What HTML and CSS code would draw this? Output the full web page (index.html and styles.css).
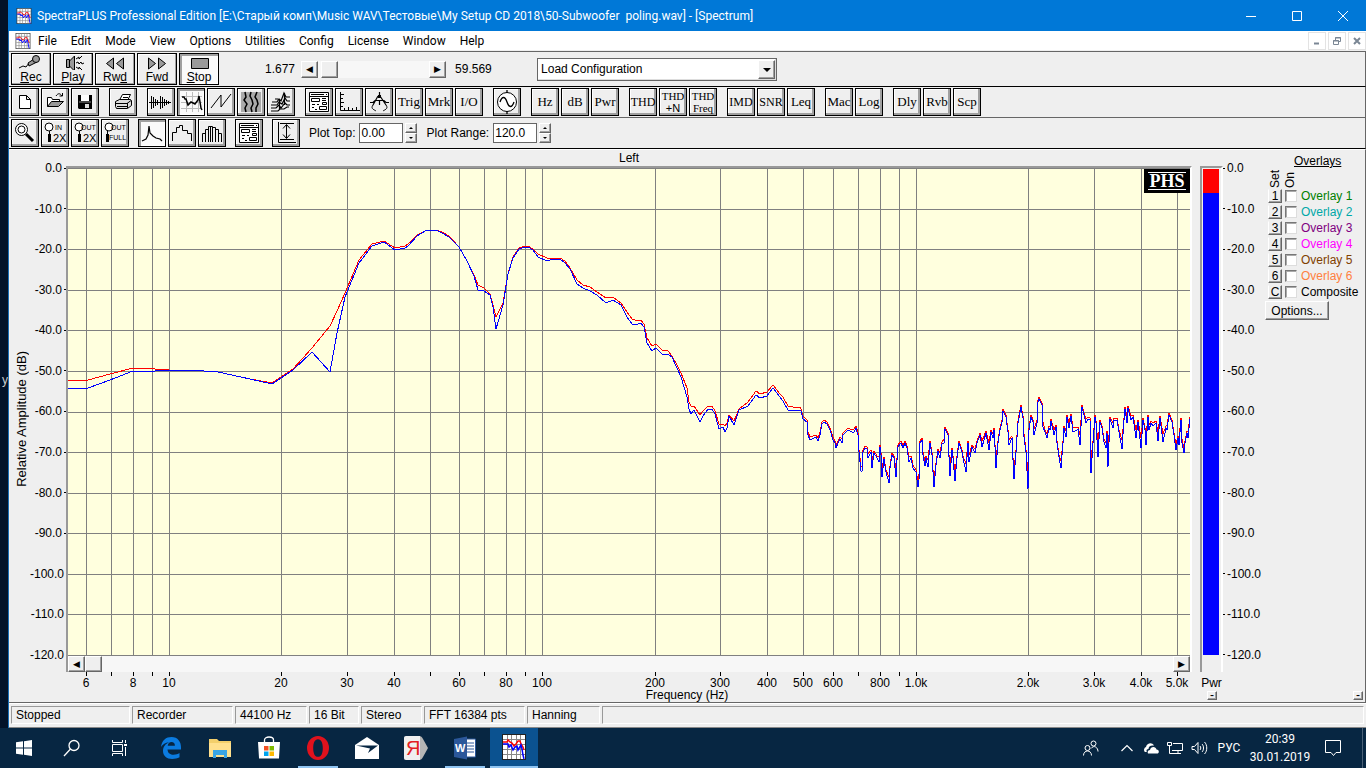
FILE: index.html
```html
<!DOCTYPE html>
<html lang="ru">
<head>
    <meta charset="UTF-8">
    <meta name="viewport" content="width=device-width, initial-scale=1.0">
    <title>SpectraPLUS Professional Edition</title>
    <link rel="stylesheet" href="styles.css">
</head>
<body>
    <!-- shared icons -->
    <svg class="defs" aria-hidden="true">
        <symbol id="app-icon" viewBox="0 0 24 26">
            <rect x="0.5" y="0.5" width="23" height="25" fill="#fff" stroke="#222"/>
            <path d="M5.500 1v24M9.500 1v24M14.500 1v24M18.500 1v24M1 5.500h22M1 10.500h22M1 15.500h22M1 20.500h22" stroke="#888"/>
            <path d="M1 8h4l1-2 2 2 2 1 2 3 2-2 2-3h2l1 3 2 3 1 3" fill="none" stroke="#f00" stroke-width="1.500"/>
            <path d="M1 10h5l1 3 2-2 2 5 2-3 2-1 1 4 3-5 1 4 1 6 1 4" fill="none" stroke="#00f" stroke-width="1.500"/>
        </symbol>
        <symbol id="dialog-icon" viewBox="1 1 26 26">
            <path d="M4.500 4.500h19v19h-19zM4.500 8.500h19" fill="#fff" stroke="#000"/>
            <path d="M6 6.500h13M21 6.500h1" stroke="#000"/>
            <path d="M6.500 10.500h8v3h-8zM17.500 14.500h4v2h-4zM14.500 18.500h7v3h-7z" fill="none" stroke="#000"/>
            <path d="M17 10.500h4M17 12.500h4M7 16.500h3M12 16.500h2M7 19.500h2M10 21.500h2" stroke="#000"/>
        </symbol>
    </svg>

    <div class="desktop">
        <span class="desktop-label">y</span>
        <div class="window">
            <header class="titlebar">
                <svg class="app-icon"><use href="#app-icon"/></svg>
                <h1>SpectraPLUS Professional Edition [E:\Старый комп\Music WAV\Тестовые\My Setup CD 2018\50-Subwoofer&nbsp; poling.wav] - [Spectrum]</h1>
                <div class="window-buttons">
                    <button aria-label="Minimize"><svg width="10" height="10"><path d="M0 5.500h10" stroke="#fff"/></svg></button>
                    <button aria-label="Maximize"><svg width="10" height="10"><path d="M.5.500h9v9h-9z" stroke="#fff" fill="none"/></svg></button>
                    <button aria-label="Close"><svg width="10" height="10"><path d="M0 0l10 10M10 0L0 10" stroke="#fff"/></svg></button>
                </div>
            </header>

            <nav class="menubar">
                <svg class="app-icon"><use href="#app-icon"/></svg>
                <button>File</button>
                <button>Edit</button>
                <button>Mode</button>
                <button>View</button>
                <button>Options</button>
                <button>Utilities</button>
                <button>Config</button>
                <button>License</button>
                <button>Window</button>
                <button>Help</button>
                <div class="child-buttons">
                    <button aria-label="Minimize spectrum"><svg width="10" height="10"><path d="M2 7.500h5" stroke="#7a8694" stroke-width="2"/></svg></button>
                    <button aria-label="Restore spectrum"><svg width="10" height="10"><path d="M3.500 4V1.500h5v4H7M1.500 4.500h5v4h-5zM3 2h6M1 5h6" stroke="#7a8694" fill="none"/></svg></button>
                    <button aria-label="Close spectrum"><svg width="10" height="10"><path d="M2 2l6 6M8 2L2 8" stroke="#7a8694" stroke-width="2"/></svg></button>
                </div>
            </nav>

            <!-- Transport -->
            <div class="toolbar transport">
                <button class="play-btn"><svg viewBox="0 0 38 16"><path d="M7 14l4-2 3 1 3-4" fill="none" stroke="#000"/><path d="M16 9l6-4 3 3-8 4z" fill="#999" stroke="#000"/><circle cx="24" cy="5" r="3.500" fill="#999" stroke="#000"/></svg><span><u>R</u>ec</span></button>
                <button class="play-btn"><svg viewBox="0 0 38 16"><path d="M12.500 5.500h3v8h-3zM15.500 7l5-5v15l-5-5z" fill="#999" stroke="#000"/><path d="M22 5l3-2v2l3-3M22 9l2-1 1 2 2-2 1 2 2-1M22 13l3 2v-2l3 3" fill="none" stroke="#000"/></svg><span><u>P</u>lay</span></button>
                <button class="play-btn"><svg viewBox="0 0 38 16"><path d="M17.500 4v11l-7-5.500zM27.500 4v11l-7-5.500z" fill="#999" stroke="#000"/></svg><span>Rw<u>d</u></span></button>
                <button class="play-btn"><svg viewBox="0 0 38 16"><path d="M10.500 4v11l7-5.500zM20.500 4v11l7-5.500z" fill="#999" stroke="#000"/></svg><span>Fwd</span></button>
                <button class="play-btn pressed"><svg viewBox="0 0 38 16"><path d="M11.500 4.500h17v10h-17z" fill="#999" stroke="#000"/></svg><span><u>S</u>top</span></button>
                <div class="position">
                    <label for="position">1.677</label>
                    <button class="bevel arrow" aria-label="Back">&#9664;&#xFE0E;</button>
                    <input type="range" id="position" min="0" max="100" value="3">
                    <button class="bevel arrow" aria-label="Forward">&#9654;&#xFE0E;</button>
                    <output>59.569</output>
                </div>
                <div class="config">
                    <select aria-label="Configuration">
                        <option>Load Configuration</option>
                    </select>
                    <span class="bevel drop-arrow"></span>
                </div>
            </div>

            <!-- Main tools -->
            <div class="toolbar tools">
                <div class="group">
                    <button class="tool" aria-label="New"><svg viewBox="1 1 26 26"><path d="M8.500 7.500h7l4 4v9h-11zM15.500 7.500v4h4" fill="#fff" stroke="#000"/></svg></button>
                    <button class="tool" aria-label="Open"><svg viewBox="1 1 26 26"><path d="M6.500 18.500v-9h4l1 2h7v2" fill="#fff" stroke="#000"/><path d="M6.500 18.500l4-5h12l-5 5z" fill="#999" stroke="#000"/><path d="M15 8c2-3 4-3 6 0M21.500 5v3h-3" fill="none" stroke="#000"/></svg></button>
                    <button class="tool" aria-label="Save"><svg viewBox="1 1 26 26"><path d="M7 7h14v14H8l-1-1z"/><path d="M10 7h8v6h-8z" fill="#fff"/><path d="M14 16h4v4h-4z" fill="#ddd"/><path d="M8 14h12" stroke="#888"/></svg></button>
                </div>
                <div class="group">
                    <button class="tool" aria-label="Print"><svg viewBox="1 1 26 26"><path d="M10.500 12l3-5.500h8l-3 6" fill="#fff" stroke="#000"/><path d="M6.500 13.500l4-2h11l1 1v5l-4 3h-11l-1-2z" fill="#ddd" stroke="#000"/><path d="M7 15.500h11l4-3M8 18.500h10M18.500 15v5M14 9.500h5" stroke="#000" fill="none"/></svg></button>
                </div>
                <div class="group">
                    <button class="tool" aria-label="Time series"><svg viewBox="1 1 26 26"><path d="M2 14.500h22M4.500 8v13M6.500 9v11M8.500 11v7M10.500 12v5M13.500 8v13M15.500 9v11M17.500 11v7M19.500 12v5M21.500 13v3" stroke="#000"/></svg></button>
                    <button class="tool pressed" aria-label="Spectrum"><svg viewBox="1 1 26 26"><path d="M9.500 4v20M15.500 4v20M21.500 4v20M4 8.500h21M4 14.500h21M4 20.500h21" stroke="#bbb"/><path d="M5 9h2l1 2h1l2 6 3-3 4 2 3-4 1-4 1 6 1 6 1 2" fill="none" stroke="#000" stroke-width="1.500"/></svg></button>
                    <button class="tool" aria-label="Phase"><svg viewBox="1 1 26 26"><path d="M4 20L14 7v12L24 6" fill="none" stroke="#000"/></svg></button>
                    <button class="tool" aria-label="Spectrogram"><svg viewBox="1 1 26 26"><path d="M4 4h20v20H4z" fill="#aaa"/><path d="M8 4l1 5-2 3 3 4-2 4 1 4M14 4l-1 4 2 4 1 4-2 4 1 4M20 4l-2 5 2 3 1 4-2 4v4" fill="none" stroke="#000" stroke-width="1.500"/></svg></button>
                    <button class="tool" aria-label="3-D surface"><svg viewBox="1 1 26 26"><path d="M8 11h3M5 14h5l2-3 2 2 3-8 2 4h4M4 17h6l2-3 3 2 3-6 2 3h3M4 20h5l3-3 2 3 4-5 2 2h3M4 23h7l2-2h4l3-2h2M17.500 5v12M12.500 12v9" fill="none" stroke="#000" stroke-width="1.200"/></svg></button>
                </div>
                <div class="group">
                    <button class="tool" aria-label="Processing settings"><svg><use href="#dialog-icon"/></svg></button>
                    <button class="tool" aria-label="Scaling"><svg viewBox="1 1 26 26"><path d="M5.500 4v18.500H25M6 6.500h3M6 10.500h2M6 14.500h3M6 18.500h2M9.500 22v-2M13.500 22v-3M17.500 22v-2M21.500 22v-3" stroke="#000" fill="none"/></svg></button>
                    <button class="tool" aria-label="Calibration"><svg viewBox="1 1 26 26"><path d="M14.500 4v4M13 8l-5 9M15 8l6 9M14.500 12v5M5 14.500h3l2-2h9l2 2h3" stroke="#000" fill="none" stroke-width="1.200"/><path d="M13 7h3v3h-3z"/><path d="M8 17c-3 4 2 5 3 6M21 17c3 4-2 5-3 6" stroke="#000" fill="none"/></svg></button>
                    <button class="tool">Trig</button>
                    <button class="tool">Mrk</button>
                    <button class="tool">I/O</button>
                </div>
                <div class="group">
                    <button class="tool" aria-label="Signal generator"><svg viewBox="1 1 26 26"><circle cx="14" cy="14" r="9.500" fill="#fff" stroke="#000"/><path d="M14 2v3M14 23v3M7 14c2-6 5-6 7 0s5 6 7 0" fill="none" stroke="#000" stroke-width="1.300"/></svg></button>
                </div>
                <div class="group">
                    <button class="tool">Hz</button>
                    <button class="tool">dB</button>
                    <button class="tool">Pwr</button>
                </div>
                <div class="group">
                    <button class="tool small">THD</button>
                    <button class="tool two-line">THD<br><span class="sans">+N</span></button>
                    <button class="tool two-line">THD<br>Freq</button>
                </div>
                <div class="group">
                    <button class="tool small">IMD</button>
                    <button class="tool small">SNR</button>
                    <button class="tool">Leq</button>
                </div>
                <div class="group">
                    <button class="tool">Mac</button>
                    <button class="tool">Log</button>
                </div>
                <div class="group">
                    <button class="tool">Dly</button>
                    <button class="tool">Rvb</button>
                    <button class="tool">Scp</button>
                </div>
            </div>

            <!-- Plot tools -->
            <div class="toolbar plot-tools">
                <div class="group">
                    <button class="tool" aria-label="Zoom"><svg viewBox="1 1 26 26"><circle cx="10.500" cy="10.500" r="6" fill="#fff" stroke="#000"/><circle cx="10.500" cy="10.500" r="3.500" fill="none" stroke="#000"/><path d="M15 15l7 7" stroke="#000" stroke-width="3"/></svg></button>
                    <button class="tool" aria-label="Zoom in 2X"><svg viewBox="1 1 26 26"><circle cx="8" cy="8" r="4" fill="#fff" stroke="#000"/><path d="M8.500 12v3" stroke="#000"/><path d="M8.500 15v8" stroke="#000" stroke-width="3"/><text x="14" y="11">IN</text><text x="12" y="23" class="big">2X</text></svg></button>
                    <button class="tool" aria-label="Zoom out 2X"><svg viewBox="1 1 26 26"><circle cx="8" cy="8" r="4" fill="#fff" stroke="#000"/><path d="M8.500 12v3" stroke="#000"/><path d="M8.500 15v8" stroke="#000" stroke-width="3"/><text x="10" y="11">OUT</text><text x="12" y="23" class="big">2X</text></svg></button>
                    <button class="tool" aria-label="Zoom out full"><svg viewBox="1 1 26 26"><circle cx="8" cy="8" r="4" fill="#fff" stroke="#000"/><path d="M6.500 12v3" stroke="#000"/><path d="M6.500 15v8" stroke="#000" stroke-width="3"/><text x="10" y="11">OUT</text><text x="8" y="21">FULL</text></svg></button>
                </div>
                <div class="group">
                    <button class="tool pressed" aria-label="Line graph"><svg viewBox="1 1 26 26"><path d="M4 22l4-2 2-4 1-9 1 7 3 3 3 2 4 1 2 2" fill="none" stroke="#000" stroke-width="1.200"/></svg></button>
                    <button class="tool" aria-label="Step graph"><svg viewBox="1 1 26 26"><path d="M4.500 22v-8.500h4v-5h3v-2h3v5h5v3h4V22" fill="none" stroke="#000"/></svg></button>
                    <button class="tool" aria-label="Bar graph"><svg viewBox="1 1 26 26"><path d="M4.500 23v-8.500h3V23M7.500 15v-4.500h3V23M10.500 11V7.500h4V23M14.500 8.500h3V23M17.500 10.500h3V23M20.500 14.500h3V23M12.500 8v15" fill="none" stroke="#000"/></svg></button>
                </div>
                <div class="group">
                    <button class="tool" aria-label="Graph settings"><svg><use href="#dialog-icon"/></svg></button>
                </div>
                <div class="group">
                    <button class="tool" aria-label="Autoscale"><svg viewBox="1 1 26 26"><path d="M6.500 3v20.500H24M8 4.500h14M8 20.500h14M14.500 6v13M11 9.500l3.500-4 3.500 4M11 15.500l3.500 4 3.500-4" fill="none" stroke="#000"/></svg></button>
                </div>
                <label for="plot-top">Plot Top:</label>
                <input type="text" id="plot-top" value="0.00">
                <div class="spin">
                    <button class="bevel" aria-label="Raise top"></button>
                    <button class="bevel down" aria-label="Lower top"></button>
                </div>
                <label for="plot-range">Plot Range:</label>
                <input type="text" id="plot-range" value="120.0">
                <div class="spin">
                    <button class="bevel" aria-label="Raise range"></button>
                    <button class="bevel down" aria-label="Lower range"></button>
                </div>
            </div>

            <main class="spectrum">
                <h2 class="caption">Left</h2>
                <div class="y-title"><span>Relative Amplitude (dB)</span></div>
                <div class="y-axis left" id="yLeft"></div>
                <div class="plot">
                    <svg class="graph" id="graph" viewBox="68 168 1122 488" preserveAspectRatio="none"></svg>
                    <div class="plot-scroll">
                        <button class="bevel arrow" aria-label="Scroll left">&#9664;&#xFE0E;</button>
                        <input type="range" aria-label="Frequency scroll" min="0" max="100" value="0">
                        <button class="bevel arrow" aria-label="Scroll right">&#9654;&#xFE0E;</button>
                    </div>
                    <div class="logo"><span>PHS</span></div>
                </div>
                <div class="meter"><div class="over"></div><div class="level"></div></div>
                <div class="y-axis right" id="yRight"></div>
                <div class="x-axis" id="xAxis"></div>
                <div class="meter-name">Pwr</div>
                <div class="x-title">Frequency (Hz)</div>
                <button class="bevel mini mini-meter" aria-label="Hide meter">-</button>
                <button class="bevel mini mini-overlays" aria-label="Hide overlays">-</button>

                <aside class="overlays">
                    <h3>Overlays</h3>
                    <div class="heads"><span>Set</span><span>On</span></div>
                    <div class="overlay"><button class="bevel">1</button><input type="checkbox" id="ov1"><label for="ov1" class="green">Overlay 1</label></div>
                    <div class="overlay"><button class="bevel">2</button><input type="checkbox" id="ov2"><label for="ov2" class="teal">Overlay 2</label></div>
                    <div class="overlay"><button class="bevel">3</button><input type="checkbox" id="ov3"><label for="ov3" class="purple">Overlay 3</label></div>
                    <div class="overlay"><button class="bevel">4</button><input type="checkbox" id="ov4"><label for="ov4" class="magenta">Overlay 4</label></div>
                    <div class="overlay"><button class="bevel">5</button><input type="checkbox" id="ov5"><label for="ov5" class="brown">Overlay 5</label></div>
                    <div class="overlay"><button class="bevel">6</button><input type="checkbox" id="ov6"><label for="ov6" class="orange">Overlay 6</label></div>
                    <div class="overlay"><button class="bevel">C</button><input type="checkbox" id="ovc"><label for="ovc">Composite</label></div>
                    <button class="bevel options">Options...</button>
                </aside>
            </main>

            <footer class="statusbar">
                <span class="w-state">Stopped</span>
                <span class="w-mode">Recorder</span>
                <span class="w-rate">44100 Hz</span>
                <span class="w-bits">16 Bit</span>
                <span class="w-chan">Stereo</span>
                <span class="w-fft">FFT 16384 pts</span>
                <span class="w-win">Hanning</span>
                <span class="rest"></span>
            </footer>
        </div>
    </div>

    <div class="taskbar">
        <button class="task" aria-label="Start"><svg width="16" height="16"><path d="M0 2.300L7 1.300V7.500H0zM8 1.200L16 0V7.500H8zM0 8.500h7v6.200l-7-1zM8 8.500h8V16l-8-1.200z" fill="#fff"/></svg></button>
        <button class="task" aria-label="Search"><svg width="18" height="18"><circle cx="11" cy="6.500" r="5" fill="none" stroke="#fff" stroke-width="1.300"/><path d="M7.500 10L1 17" stroke="#fff" stroke-width="1.300"/></svg></button>
        <button class="task apps-start" aria-label="Task view"><svg width="18" height="18"><path d="M1.500 1v2.500h10V1M1.500 17v-2.500h10V17M1.500 5.500h10v7h-10zM14.500 1v3M14.500 8v9" stroke="#fff" fill="none"/><path d="M13 5h3v2h-3z" fill="#fff"/></svg></button>
        <button class="task" aria-label="Edge"><svg width="20" height="22" viewBox="0 0 20 22"><path d="M0 10C1 3 5 0 10.500 0 17 0 20 5 20 10v2.500H6.500c.3 4 3 5.200 6 5.200 2.300 0 4.500-.7 6-1.600v4.200c-2 1.100-4.600 1.700-7.300 1.700C5.500 22 2 18.500 2 14c0-4 2.500-7.200 6-8.700C4.500 5.500 1.500 7.500 0 10zM6.700 8.700h7.200c0-2.200-1.200-3.600-3.400-3.600-2 0-3.500 1.500-3.800 3.600z" fill="#0b7be0"/></svg></button>
        <button class="task" aria-label="Explorer"><svg width="22" height="20"><path d="M0 1h8l2 2h12v16H0z" fill="#f3cf6b"/><path d="M0 5h22v14H0z" fill="#ffe08d"/><path d="M4 20v-8h14v8h-3v-3H7v3z" fill="#3aa5e4"/></svg></button>
        <button class="task" aria-label="Store"><svg width="24" height="24"><path d="M7.500 7V4c0-4 9-4 9 0v3" fill="none" stroke="#fff" stroke-width="1.300"/><path d="M1 6h22l-1 16.500H2z" fill="#fff"/><path d="M7 10h4.500v4.500H7z" fill="#f25022"/><path d="M12.500 10H17v4.500h-4.500z" fill="#7fba00"/><path d="M7 15.500h4.500V20H7z" fill="#00a4ef"/><path d="M12.500 15.500H17V20h-4.500z" fill="#ffb900"/></svg></button>
        <button class="task running" aria-label="Opera"><svg width="24" height="24"><path d="M12 0a11 12 0 1 0 0 24 11 12 0 0 0 0-24zm0 3.200c3.300 0 4.800 3.500 4.800 8.800s-1.500 8.800-4.800 8.800S7.200 17.300 7.200 12 8.700 3.200 12 3.200z" fill="#e0121d" fill-rule="evenodd"/></svg></button>
        <button class="task" aria-label="Mail"><svg width="24" height="22"><path d="M0 8L12 0l12 8v14H0z" fill="#fff"/><path d="M1 8.500h22L13 16l2-4.500z" fill="#072642"/></svg></button>
        <button class="task" aria-label="Yandex"><svg width="24" height="24"><path d="M15 0c2 0 3 1 4 3l5 9-5 9c-1 2-2 3-4 3z" fill="#b5b5b5"/><path d="M2 0h14v24H2c-1.500 0-2-1-2-2V2C0 .7.700 0 2 0z" fill="#f0f0f0"/><text x="2" y="19" class="ya">Я</text></svg></button>
        <button class="task running" aria-label="Word"><svg width="24" height="24"><path d="M12 3h10.500v18H12z" fill="#fff" stroke="#2b579a"/><path d="M14 7h7M14 10h7M14 13h7M14 16h7" stroke="#2b579a"/><path d="M1 3l13-2.500v23L1 21z" fill="#2b579a"/><text x="2" y="16" class="word">W</text></svg></button>
        <button class="task active" aria-label="SpectraPLUS"><svg width="24" height="26"><use href="#app-icon"/></svg></button>
        <div class="tray">
            <button class="people" aria-label="People"><svg width="16" height="16"><circle cx="10.500" cy="3.500" r="2.500" fill="none" stroke="#fff"/><circle cx="4.500" cy="8" r="2.500" fill="none" stroke="#fff"/><path d="M.5 15.500c0-6 8-6 8 0M8 8.500c3-4 7-1 7 3" fill="none" stroke="#fff"/></svg></button>
            <button aria-label="Show hidden icons"><svg width="12" height="8"><path d="M.5 7L6 1.500 11.500 7" fill="none" stroke="#fff" stroke-width="1.200"/></svg></button>
            <button aria-label="OneDrive"><svg width="16" height="11"><path d="M2 9a3 3 0 0 1 1-5c1-4 6-5 8-1.500C7 2 5.500 4 5.500 6 3.500 6 3 8 4 9zM5 10.500c-1-2 .5-3.500 2-3.500.5-4 6-4 6.500-.5 3 0 3 4 .5 4z" fill="#fff"/></svg></button>
            <button aria-label="Network"><svg width="17" height="14"><path d="M.5 1.500h4v3h-4zM2.500 5v7.500h6M6 2.500h9.500v7H5M8 12.500h6M11 10v2.500" fill="none" stroke="#fff"/></svg></button>
            <button aria-label="Volume"><svg width="17" height="14"><path d="M1 5.500h2.500l3.500-4v11l-3.500-4H1zM9 5c1 1 1 3 0 4M11 3c2 2 2 6 0 8M13.500 1c3 3 3 9 0 12" fill="none" stroke="#fff"/></svg></button>
            <button class="lang">РУС</button>
            <button class="clock">20:39<br>30.01.2019</button>
            <button class="notes" aria-label="Notifications"><svg width="16" height="16"><path d="M.5.500h15v12H11l-2.500 3-2.500-3H.5z" fill="none" stroke="#fff"/></svg></button>
        </div>
    </div>

    <script src="script.js"></script>
</body>
</html>
```
FILE: styles.css
```css
* {
    box-sizing: border-box;
}
body {
    margin: 0;
    min-height: 100vh;
    display: flex;
    flex-direction: column;
    background: #021229;
    color: #000;
    font: 12px/14px "Liberation Sans", Arial, sans-serif;
}
button, input, select {
    font: inherit;
    color: inherit;
    margin: 0;
    padding: 0;
    border: 0;
    border-radius: 0;
    background: none;
}
h1, h2, h3 {
    margin: 0;
    font-size: 12px;
    font-weight: normal;
}
svg {
    display: block;
}
.defs {
    position: absolute;
    width: 0;
    height: 0;
}

.desktop {
    position: relative;
    flex: 1;
    display: flex;
    padding-left: 8px;
}
.desktop-label {
    position: absolute;
    left: 2px;
    top: 373px;
    color: #ccc;
}
.window {
    position: relative;
    flex: 1;
    min-width: 0;
    display: flex;
    flex-direction: column;
    background: #efefef;
    border-left: 1px solid #1a6fb8;
}
.app-icon {
    width: 16px;
    height: 16px;
}

/* Title and menu */
.titlebar {
    display: flex;
    align-items: center;
    height: 31px;
    margin-left: -1px;
    padding-left: 8px;
    background: #0078d7;
    color: #fff;
}
.titlebar h1 {
    flex: 1;
    padding-left: 5px;
    font: 12px/16px Roboto, sans-serif;
    white-space: nowrap;
}
.window-buttons {
    display: flex;
}
.window-buttons button {
    display: grid;
    place-items: center;
    width: 46px;
    height: 31px;
}
.menubar {
    display: flex;
    align-items: center;
    height: 20px;
    padding-left: 6px;
    background: #fff;
    border-bottom: 1px solid #efefef;
    font: 12px/16px Roboto, sans-serif;
}
.menubar > button {
    padding: 0 7px;
}
.child-buttons {
    display: flex;
    gap: 2px;
    margin-left: auto;
}
.child-buttons button {
    display: grid;
    place-items: center;
    width: 18px;
    height: 18px;
    border: 1px solid #e3e3e3;
}

/* Toolbars */
.toolbar {
    display: flex;
    align-items: center;
    padding: 0 2px;
    border-right: 1px solid #666;
}
.transport {
    height: 35px;
    gap: 2px;
    border-top: 1px solid #666;
}
.tools {
    height: 31px;
    gap: 10px;
    border-top: 1px solid #000;
}
.plot-tools {
    height: 32px;
    gap: 9px;
    border-top: 1px solid #666;
    border-bottom: 1px solid #000;
}
.group {
    display: flex;
    gap: 2px;
}
.play-btn {
    width: 40px;
    height: 32px;
    border: 1px solid #000;
    box-shadow: inset -1px -1px 0 #a0a0a0, inset 1px 1px 0 #fff;
    line-height: 14px;
}
.play-btn svg {
    width: 38px;
    height: 16px;
}
.play-btn span {
    display: block;
}
.tool {
    display: grid;
    place-content: center;
    width: 28px;
    height: 28px;
    border: 1px solid #000;
    box-shadow: inset -2px -2px 0 #a0a0a0, inset 1px 1px 0 #fff;
    font: 13px/14px "Liberation Serif", serif;
}
.tool.small {
    font-size: 12px;
}
.tool.two-line {
    font-size: 11px;
    line-height: 12px;
}
.tool svg {
    width: 26px;
    height: 26px;
}
.tool text {
    font: 7px "Liberation Sans", sans-serif;
}
.tool text.big {
    font-size: 11px;
}
.tool .sans {
    font-family: "Liberation Sans", sans-serif;
}
.pressed {
    background: #fafafa;
    box-shadow: inset 2px 2px 0 #a0a0a0, inset -1px -1px 0 #fff;
}
.bevel {
    background: #efefef;
    border: 1px solid;
    border-color: #fff #666 #666 #fff;
    box-shadow: inset -1px -1px 0 #a0a0a0;
}
.arrow {
    width: 17px;
    height: 17px;
    font: 9px/12px "DejaVu Sans", sans-serif;
}
.position {
    display: flex;
    align-items: center;
    margin-left: 44px;
}
.position label {
    padding-right: 6px;
}
.position input {
    width: 111px;
    height: 17px;
}
.position output {
    width: 91px;
    padding-left: 9px;
}
input[type="range"] {
    appearance: none;
    background: #f7f7f7;
}
input[type="range"]::-webkit-slider-thumb {
    appearance: none;
    width: 17px;
    height: 17px;
    background: #efefef;
    border: 1px solid;
    border-color: #fff #666 #666 #fff;
    box-shadow: inset -1px -1px 0 #a0a0a0;
}
.config {
    position: relative;
    margin-left: -2px;
}
.config select {
    appearance: none;
    display: block;
    width: 240px;
    height: 23px;
    padding-left: 3px;
    background: #fff;
    border: 1px solid #666;
    box-shadow: inset -1px -1px 0 #ddd;
}
.drop-arrow {
    position: absolute;
    right: 2px;
    top: 2px;
    width: 17px;
    height: 19px;
    pointer-events: none;
}
.drop-arrow::after {
    content: "";
    position: absolute;
    left: 4px;
    top: 7px;
    border: 4px solid transparent;
    border-top-color: #000;
    border-bottom: 0;
}
.plot-tools input {
    width: 44px;
    height: 20px;
    margin-left: -5px;
    padding-left: 1px;
    background: #fff;
    border: 1px solid #666;
}
.spin {
    display: flex;
    flex-direction: column;
    margin-left: -7px;
}
.spin .bevel {
    display: grid;
    place-items: center;
    width: 12px;
    height: 10px;
}
.spin .bevel::after {
    content: "";
    border: 2px solid transparent;
    border-bottom-color: #000;
    border-top: 0;
}
.spin .down::after {
    border: 2px solid transparent;
    border-top-color: #000;
    border-bottom: 0;
}

/* Spectrum view */
.spectrum {
    flex: 1;
    position: relative;
    display: grid;
    grid-template-columns: 25px 32px minmax(0, 1fr) 8px 23px 42px 100px;
    grid-template-rows: 16px minmax(300px, 1fr) 17px 13px;
    border-top: 1px solid #fff;
    border-right: 1px solid #666;
}
.caption {
    grid-area: 1 / 3;
    text-align: center;
    line-height: 16px;
}
.y-title {
    grid-area: 2 / 1;
    display: grid;
    place-items: center;
    font-size: 13px;
}
.y-title span {
    writing-mode: vertical-rl;
    transform: rotate(180deg);
    white-space: nowrap;
}
.y-axis {
    grid-row: 2;
    display: flex;
    flex-direction: column;
    justify-content: space-between;
    margin: -5px 0 10px;
    white-space: nowrap;
}
.y-axis span {
    display: flex;
    align-items: center;
}
.y-axis.left {
    grid-column: 2;
    text-align: right;
}
.left span {
    justify-content: flex-end;
    gap: 2px;
}
.left span::after, .right span::before {
    content: "";
    width: 2px;
    height: 1px;
    background: #000;
}
.y-axis.right {
    grid-column: 6;
}
.right span {
    gap: 2px;
}
.plot {
    grid-area: 2 / 3;
    position: relative;
    display: flex;
    flex-direction: column;
    border: 2px solid;
    border-color: #999 #fff #efefef #999;
    border-bottom: 0;
}
.graph {
    flex: 1;
    width: 100%;
    min-height: 0;
    background: #ffffde;
    shape-rendering: crispEdges;
}
.graph * {
    fill: none;
    vector-effect: non-scaling-stroke;
}
.grid-line {
    stroke: #808080;
}
.trace-red {
    stroke: #f00;
}
.trace-blue {
    stroke: #00f;
}
.plot-scroll {
    display: flex;
    height: 16px;
}
.plot-scroll .arrow {
    height: 16px;
}
.plot-scroll input {
    flex: 1;
    min-width: 0;
    height: 16px;
}
.plot-scroll input::-webkit-slider-thumb {
    height: 16px;
}
.logo {
    position: absolute;
    right: 0;
    top: 1px;
    width: 46px;
    height: 24px;
    padding: 3px 4px;
    background: #000;
}
.logo span {
    display: block;
    height: 18px;
    border: solid #fff;
    border-width: 1px 0;
    color: #fff;
    text-align: center;
    font: bold 18px/16px "Liberation Serif", serif;
}
.meter {
    grid-area: 2 / 5;
    display: flex;
    flex-direction: column;
    padding: 1px 2px 17px 1px;
    border: 2px solid;
    border-color: #999 #fff #fff #999;
    border-bottom: 0;
}
.over {
    height: 5%;
    background: #f00;
}
.level {
    flex: 1;
    background: #00f;
}
.x-axis {
    grid-area: 3 / 3;
    position: relative;
    margin: 0 2px;
}
.x-axis span {
    position: absolute;
    top: 0;
    height: 4px;
    border-left: 1px solid #000;
}
.x-axis b {
    position: absolute;
    top: 4px;
    font-weight: normal;
    transform: translateX(-50%);
}
.meter-name {
    grid-area: 3 / 5;
    padding-top: 4px;
    text-align: center;
}
.x-title {
    grid-area: 4 / 1 / 5 / 8;
    text-align: center;
    line-height: 12px;
}
.mini {
    width: 10px;
    height: 9px;
    line-height: 5px;
}
.mini-meter {
    grid-area: 4 / 5;
    margin: 2px 0 0 7px;
}
.mini-overlays {
    grid-area: 4 / 7;
    margin: 2px 2px 0 auto;
}

/* Overlays */
.overlays {
    grid-area: 1 / 7 / 3 / 8;
    display: flex;
    flex-direction: column;
    padding: 4px 0 0 3px;
}
.overlays h3 {
    padding-left: 26px;
    text-decoration: underline;
}
.heads {
    display: flex;
    gap: 1px;
    height: 20px;
    align-items: flex-end;
}
.heads span {
    writing-mode: vertical-rl;
    transform: rotate(180deg);
}
.overlay {
    display: flex;
    align-items: center;
    height: 16px;
    white-space: nowrap;
}
.overlay .bevel {
    width: 14px;
    height: 14px;
    line-height: 12px;
    border-top-color: #efefef;
    border-left-color: #fff;
}
.overlay input {
    appearance: none;
    width: 12px;
    height: 12px;
    margin: 0 4px 0 3px;
    background: #fff;
    border: 1px solid;
    border-color: #777 #ddd #ddd #777;
    box-shadow: inset 1px 1px 0 #aaa;
}
.options {
    width: 64px;
    height: 19px;
    margin: 1px 0 0 -3px;
}
.green { color: #008000; }
.teal { color: #00a8a8; }
.purple { color: #800080; }
.magenta { color: #f0f; }
.brown { color: #804000; }
.orange { color: #ff8040; }

/* Status bar */
.statusbar {
    display: flex;
    gap: 2px;
    height: 26px;
    padding: 3px 2px;
    border-top: 1px solid #666;
    border-bottom: 1px solid #888;
    box-shadow: inset 0 1px 0 #fff;
}
.statusbar span {
    height: 18px;
    padding-left: 4px;
    border: 1px solid;
    border-color: #999 #fff #fff #999;
    line-height: 16px;
    white-space: nowrap;
}
.w-state { width: 119px; }
.w-mode { width: 101px; }
.w-rate { width: 72px; }
.w-bits { width: 50px; }
.w-chan { width: 61px; }
.w-fft { width: 101px; }
.w-win { width: 73px; }
.rest { flex: 1; }

/* Taskbar */
.taskbar {
    display: flex;
    height: 40px;
    background: #072642;
    color: #fff;
}
.task {
    display: grid;
    place-items: center;
    width: 48px;
    height: 40px;
    margin-right: 1px;
}
.task:nth-child(-n+2) {
    margin-right: 0;
}
.apps-start {
    margin-right: 3px;
}
.running {
    background: linear-gradient(#8fc4f2, #8fc4f2) center bottom / 40px 2px no-repeat;
}
.active {
    background: #0b5290;
    border-bottom: 2px solid #8fc4f2;
}
.ya {
    font: 20px "Liberation Sans", sans-serif;
    fill: #e31e24;
}
.word {
    font: bold 11px "Liberation Sans", sans-serif;
    fill: #fff;
}
.tray {
    display: flex;
    margin-left: auto;
    margin-right: 3px;
    padding-right: 9px;
    border-right: 1px solid #4a6076;
    font: 12px/18px Roboto, sans-serif;
}
.tray button {
    display: grid;
    place-items: center;
    width: 24px;
}
.tray .people {
    width: 48px;
}
.tray .lang {
    width: 36px;
}
.tray .clock {
    display: block;
    width: 66px;
}
.tray .notes {
    width: 40px;
}
```
FILE: script.js
```js
// trace points: x, blue y, red y
const low = [
    [68,388,380],[88,388,380],[110,380,374],[133,371,368],[145,371,368],[155,371,369],[169,370,370],[190,370,370],
    [218,372,372],[250,379,379],[272,384,383],[293,370,369],[312,352,348],[330,372,326],[337,333,311],[345,297,293],
    [359,263,260],[372,246,244],[384,242,241],[395,250,248],[405,248,246],[408,246,244],[417,236,235],[425,231,231],
    [431,230,230],[436,230,230],[442,233,232],[449,237,236],[459,247,247],[467,261,261],[474,276,275],[478,290,285],
    [484,291,288],[490,295,294],[493,307,305],[496,329,317],[503,305,303],[508,274,274],[513,258,257],[519,249,248],
    [525,247,246],[528,247,246],[533,250,249],[538,257,254],[547,261,258],[553,259,258],[560,259,258],[565,263,261],
    [570,269,268],[577,284,280],[583,288,285],[590,291,287],[597,295,292],[606,303,298],[613,300,297],[621,305,303],
    [627,317,312],[632,324,319],[635,325,320],[641,323,320],[644,327,324],[647,343,338],[652,351,346],[656,348,344],
    [662,354,350],[668,354,351],[672,357,356],[677,368,365],[681,377,373],[687,397,388],[689,409,402],[691,414,406],
    [694,410,406],[700,422,415],[703,416,411],[708,409,406],[712,409,406],[715,414,411],[719,429,424],[723,427,424],
    [725,432,426],[727,428,423],[729,416,415],[734,425,421],[739,410,409],[748,406,402],[756,395,391],[760,398,394],
    [767,396,392],[773,388,385],[780,397,394],[783,401,397],[788,410,406],[793,411,407],[800,410,407]
];

// noisy upper band: x, y
const high = [
    [801,411],[803,419],[807,422],[808,435],[810,440],[816,437],[818,441],[820,435],[822,424],[824,422],[827,424],
    [830,430],[833,440],[835,443],[836,448],[838,443],[840,439],[842,443],[843,435],[848,430],[852,432],[854,432],
    [856,428],[858,435],[859,452],[861,471],[862,471],[863,452],[865,448],[867,449],[868,458],[871,452],[872,468],
    [874,453],[877,458],[879,462],[880,447],[881,455],[882,477],[884,459],[886,472],[889,483],[890,468],[892,455],
    [894,458],[896,477],[897,460],[898,447],[901,443],[903,448],[905,443],[907,448],[909,462],[911,458],[913,468],
    [916,472],[918,487],[919,480],[920,443],[922,440],[923,455],[925,466],[926,458],[928,467],[930,443],[932,455],
    [933,472],[934,487],[936,465],[938,451],[940,458],[942,444],[944,443],[945,429],[948,435],[949,457],[950,476],
    [952,450],[953,458],[955,481],[957,458],[959,443],[962,452],[963,458],[966,472],[968,443],[969,462],[972,447],
    [975,453],[977,443],[980,435],[982,447],[986,433],[989,450],[991,432],[993,438],[994,430],[995,447],[996,468],
    [998,443],[1000,430],[1002,422],[1003,411],[1006,417],[1008,432],[1009,445],[1012,438],[1013,460],[1014,479],
    [1016,452],[1018,423],[1019,418],[1021,407],[1023,418],[1024,437],[1026,452],[1028,489],[1029,430],[1031,417],
    [1033,422],[1034,435],[1037,423],[1038,402],[1039,399],[1042,405],[1043,427],[1045,432],[1047,438],[1049,428],
    [1050,430],[1051,421],[1054,435],[1056,427],[1057,443],[1059,457],[1061,468],[1063,443],[1064,428],[1066,437],
    [1067,417],[1069,428],[1071,416],[1073,432],[1077,430],[1078,429],[1080,445],[1082,407],[1084,415],[1086,423],
    [1088,419],[1090,420],[1091,473],[1093,443],[1095,417],[1096,423],[1098,457],[1100,422],[1102,428],[1104,442],
    [1106,448],[1107,433],[1108,467],[1110,419],[1113,428],[1114,420],[1117,420],[1119,432],[1122,449],[1124,420],
    [1125,409],[1127,423],[1128,408],[1131,420],[1133,417],[1136,438],[1138,422],[1141,448],[1143,420],[1145,430],
    [1146,445],[1148,417],[1149,430],[1151,423],[1153,426],[1156,423],[1158,441],[1160,418],[1163,442],[1166,428],
    [1167,430],[1169,415],[1172,422],[1174,435],[1176,450],[1178,438],[1179,445],[1181,420],[1182,443],[1184,453],
    [1185,443],[1187,433],[1188,438],[1190,419]
];

// averaged trace follows the peaks and skips part of each dip
const highRed = high.map(([x, y], i) => {
    const prev = high[i - 1] || high[i];
    const next = high[i + 1] || high[i];
    const dip = Math.max(0, y - (prev[1] + next[1]) / 2);
    return [x, Math.round(y - 2 - dip * 0.3)];
});

const graph = document.getElementById('graph');

function draw(tag, attrs) {
    const el = document.createElementNS('http://www.w3.org/2000/svg', tag);
    for (const name in attrs) el.setAttribute(name, attrs[name]);
    graph.appendChild(el);
}

// frequency -> x in graph units
function freqX(f) {
    return 169.4 + 373.4 * Math.log10(f / 10);
}

const freqs = [6, 7, 8, 9];
for (const decade of [10, 100, 1000]) {
    for (let n = 1; n < 10; n++) {
        if (n * decade <= 5000) freqs.push(n * decade);
    }
}
const labelled = [6, 8, 10, 20, 30, 40, 60, 80, 100, 200, 300, 400, 500, 600, 800, 1000, 2000, 3000, 4000, 5000];

const xAxis = document.getElementById('xAxis');
freqs.forEach(f => {
    const x = Math.floor(freqX(f));
    draw('path', { d: `M${x + 0.5} 168v488`, class: 'grid-line' });
    const left = (x - 68) / 1122 * 100;
    xAxis.insertAdjacentHTML('beforeend', `<span style="left:${left}%"></span>`);
    if (labelled.includes(f)) {
        const text = f >= 1000 ? (f / 1000).toFixed(1) + 'k' : f;
        xAxis.insertAdjacentHTML('beforeend', `<b style="left:${left}%">${text}</b>`);
    }
});

for (let i = 0; i <= 12; i++) {
    const y = 168 + Math.round(i * 487 / 12);
    draw('path', { d: `M68 ${y + 0.5}h1122`, class: 'grid-line' });
    const db = i ? (-10 * i).toFixed(1) : '0.0';
    document.getElementById('yLeft').insertAdjacentHTML('beforeend', `<span>${db}</span>`);
    document.getElementById('yRight').insertAdjacentHTML('beforeend', `<span>${db}</span>`);
}

const red = low.map(p => [p[0], p[2]]).concat(highRed);
const blue = low.map(p => [p[0], p[1]]).concat(high);
draw('polyline', { points: red.join(' '), class: 'trace-red' });
draw('polyline', { points: blue.join(' '), class: 'trace-blue' });
```
